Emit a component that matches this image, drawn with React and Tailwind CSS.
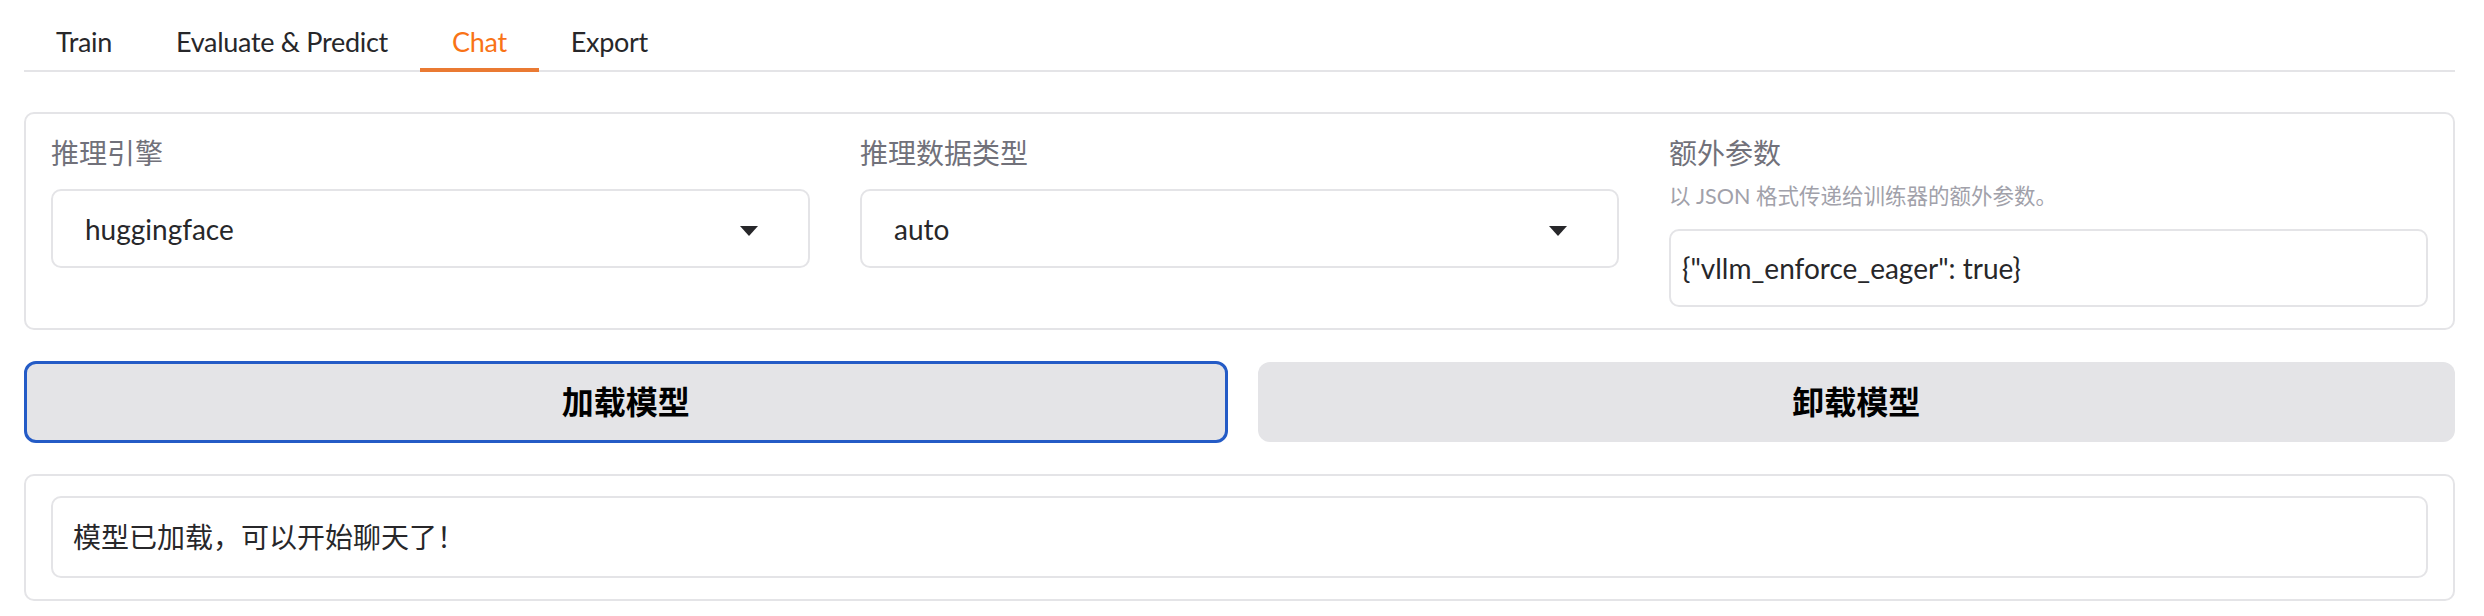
export default function App() {
  const tabs = ["Train", "Evaluate & Predict", "Chat", "Export"];
  return (
    <div className="w-[2484px] h-[616px] bg-white pl-[24px] pr-[29px] pt-[12px] font-[Lato,'Noto_Sans_CJK_SC',sans-serif] text-[#27272a]">
      <div className="flex border-b-2 border-[#e4e4e7]">
        {tabs.map((t) => (
          <div
            key={t}
            className={
              "relative h-[58px] px-[32px] flex items-center text-[27px] tracking-[-0.3px] leading-none " +
              (t === "Chat" ? "text-[#f97316]" : "text-[#27272a]")
            }
          >
            {t}
            {t === "Chat" && (
              <span className="absolute left-0 right-0 bottom-[-2px] h-[4px] bg-[#ea7a33]" />
            )}
          </div>
        ))}
      </div>

      <div className="mt-[40px] border-2 border-[#e4e4e7] rounded-[10px] px-[25px] pt-[22px] pb-[21px] grid grid-cols-3 gap-x-[50px]">
        <div className="flex flex-col">
          <div className="h-[34px] leading-[34px] text-[28px] text-[#71717a]">推理引擎</div>
          <div className="mt-[19px] h-[79px] border-2 border-[#e4e4e7] rounded-[10px] pl-[32px] pr-[50px] flex items-center justify-between">
            <span className="text-[28px] leading-none text-[#27272a]">huggingface</span>
            <svg width="18" height="10" viewBox="0 0 18 10" className="mt-[4px]">
              <path d="M0 0 L18 0 L9 10 Z" fill="#27272a" />
            </svg>
          </div>
        </div>
        <div className="flex flex-col">
          <div className="h-[34px] leading-[34px] text-[28px] text-[#71717a]">推理数据类型</div>
          <div className="mt-[19px] h-[79px] border-2 border-[#e4e4e7] rounded-[10px] pl-[32px] pr-[50px] flex items-center justify-between">
            <span className="text-[28px] leading-none text-[#27272a]">auto</span>
            <svg width="18" height="10" viewBox="0 0 18 10" className="mt-[4px]">
              <path d="M0 0 L18 0 L9 10 Z" fill="#27272a" />
            </svg>
          </div>
        </div>
        <div className="flex flex-col">
          <div className="h-[34px] leading-[34px] text-[28px] text-[#71717a]">额外参数</div>
          <div className="mt-[10px] h-[32px] leading-[32px] text-[21.5px] text-[#a1a1aa]">以 JSON 格式传递给训练器的额外参数。</div>
          <div className="mt-[17px] h-[78px] border-2 border-[#e4e4e7] rounded-[10px] pl-[11px] flex items-center">
            <span className="text-[28px] leading-none text-[#27272a]">{'{"vllm_enforce_eager": true}'}</span>
          </div>
        </div>
      </div>

      <div className="mt-[32px] flex gap-[30px]">
        <button className="flex-1 h-[82px] -mt-[1px] -mb-[1px] rounded-[12px] bg-[#e4e4e7] border-[3px] border-[#245bc6] text-[32px] font-bold text-black flex items-center justify-center leading-none">
          加载模型
        </button>
        <button className="flex-1 h-[80px] rounded-[12px] bg-[#e4e4e7] text-[32px] font-bold text-black flex items-center justify-center leading-none">
          卸载模型
        </button>
      </div>

      <div className="mt-[32px] border-2 border-[#e4e4e7] rounded-[10px] px-[25px] pt-[20px] pb-[21px]">
        <div className="h-[82px] border-2 border-[#e4e4e7] rounded-[10px] pl-[20px] flex items-center">
          <span className="text-[28px] leading-none text-[#27272a]">模型已加载，可以开始聊天了！</span>
        </div>
      </div>
    </div>
  );
}
